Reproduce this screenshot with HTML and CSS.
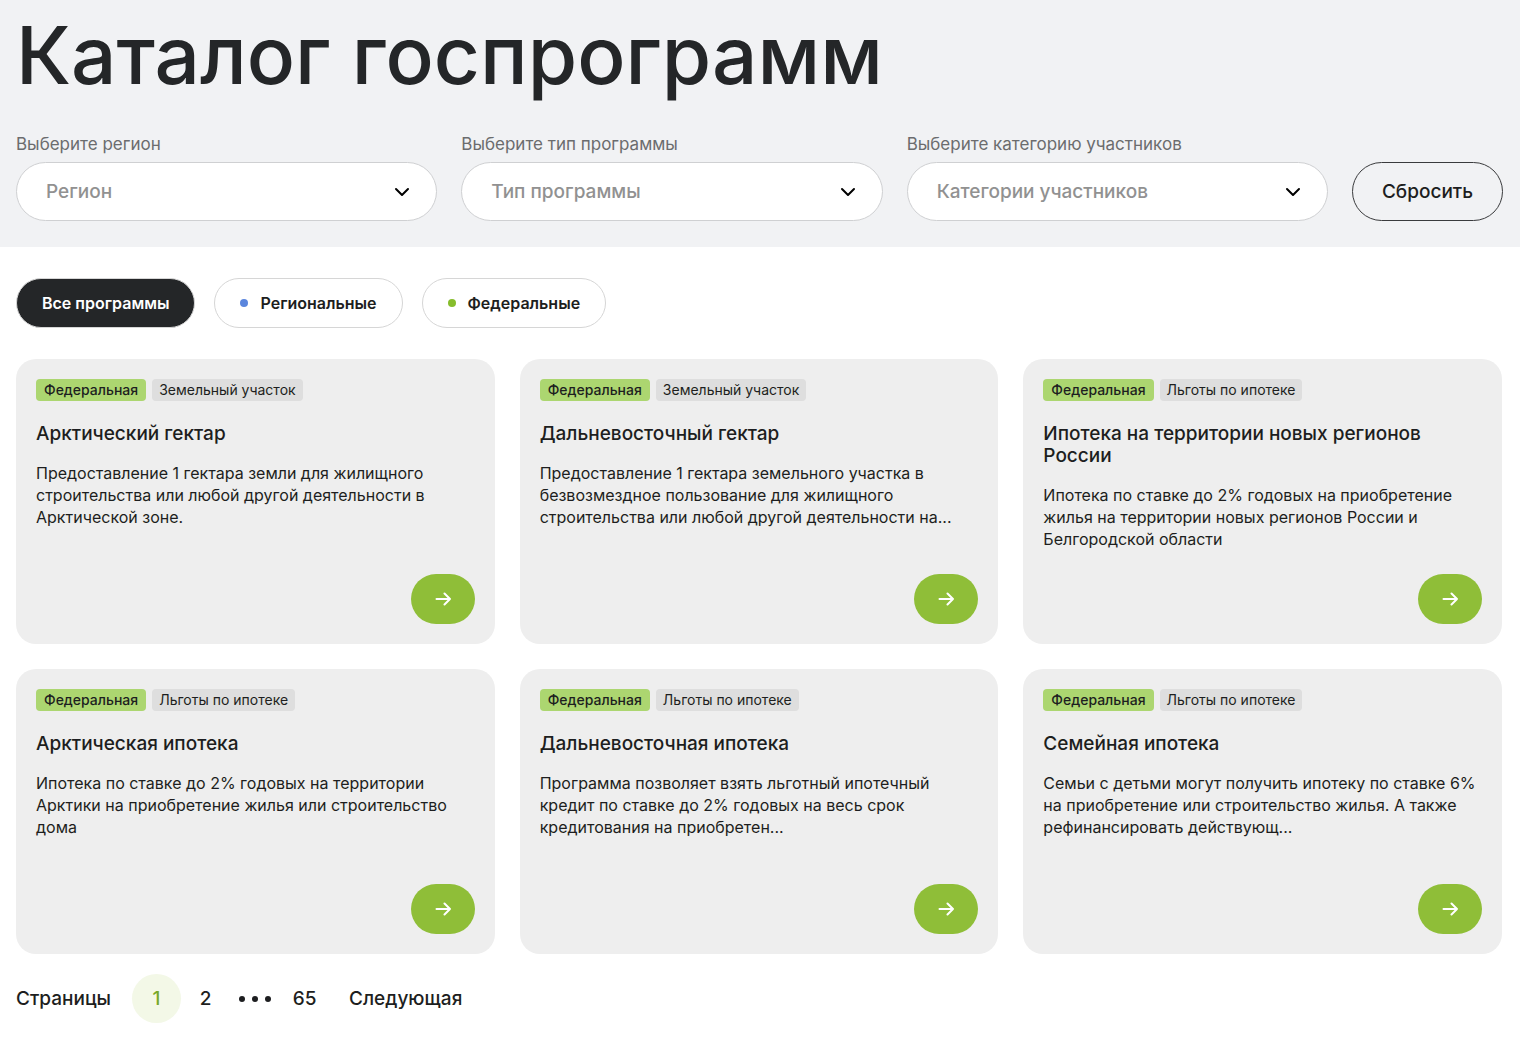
FILE: index.html
```html
<!DOCTYPE html>
<html lang="ru">
<head>
<meta charset="utf-8">
<meta name="viewport" content="width=device-width, initial-scale=1">
<title>Каталог госпрограмм</title>
<link rel="stylesheet" href="styles.css">
</head>
<body>
<svg class="sprite" aria-hidden="true">
  <symbol id="chevron" viewBox="0 0 16 10"><path d="M2 2l6 6 6-6" fill="none" stroke="currentColor" stroke-width="2" stroke-linecap="round" stroke-linejoin="round"/></symbol>
  <symbol id="arrow" viewBox="0 0 16 14"><path d="M1.5 7H15M9.500 1.500L15 7l-5.500 5.500" fill="none" stroke="currentColor" stroke-width="2" stroke-linecap="round" stroke-linejoin="round"/></symbol>
</svg>
<header class="hero">
  <h1 class="hero-title">Каталог госпрограмм</h1>
  <form class="filters">
    <div class="field">
      <label class="field-label" for="region">Выберите регион</label>
      <div class="select-box">
        <select class="select" id="region"><option>Регион</option></select>
        <svg class="chevron"><use href="#chevron"/></svg>
      </div>
    </div>
    <div class="field">
      <label class="field-label" for="type">Выберите тип программы</label>
      <div class="select-box">
        <select class="select" id="type"><option>Тип программы</option></select>
        <svg class="chevron"><use href="#chevron"/></svg>
      </div>
    </div>
    <div class="field">
      <label class="field-label" for="category">Выберите категорию участников</label>
      <div class="select-box">
        <select class="select" id="category"><option>Категории участников</option></select>
        <svg class="chevron"><use href="#chevron"/></svg>
      </div>
    </div>
    <button class="reset" type="reset">Сбросить</button>
  </form>
</header>
<main class="content">
  <div class="tabs">
    <button class="tab tab-active" type="button">Все программы</button>
    <button class="tab" type="button"><span class="dot dot-blue"></span>Региональные</button>
    <button class="tab" type="button"><span class="dot dot-green"></span>Федеральные</button>
  </div>
  <section class="cards">
    <article class="card">
      <div class="tags"><span class="tag tag-green">Федеральная</span><span class="tag">Земельный участок</span></div>
      <h2 class="card-title">Арктический гектар</h2>
      <p class="card-text">Предоставление 1 гектара земли для жилищного<br>строительства или любой другой деятельности в<br>Арктической зоне.</p>
      <a class="card-link" href="#" aria-label="Подробнее"><svg class="arrow"><use href="#arrow"/></svg></a>
    </article>
    <article class="card">
      <div class="tags"><span class="tag tag-green">Федеральная</span><span class="tag">Земельный участок</span></div>
      <h2 class="card-title">Дальневосточный гектар</h2>
      <p class="card-text">Предоставление 1 гектара земельного участка в<br>безвозмездное пользование для жилищного<br>строительства или любой другой деятельности на...</p>
      <a class="card-link" href="#" aria-label="Подробнее"><svg class="arrow"><use href="#arrow"/></svg></a>
    </article>
    <article class="card">
      <div class="tags"><span class="tag tag-green">Федеральная</span><span class="tag">Льготы по ипотеке</span></div>
      <h2 class="card-title">Ипотека на территории новых регионов<br>России</h2>
      <p class="card-text">Ипотека по ставке до 2% годовых на приобретение<br>жилья на территории новых регионов России и<br>Белгородской области</p>
      <a class="card-link" href="#" aria-label="Подробнее"><svg class="arrow"><use href="#arrow"/></svg></a>
    </article>
    <article class="card">
      <div class="tags"><span class="tag tag-green">Федеральная</span><span class="tag">Льготы по ипотеке</span></div>
      <h2 class="card-title">Арктическая ипотека</h2>
      <p class="card-text">Ипотека по ставке до 2% годовых на территории<br>Арктики на приобретение жилья или строительство<br>дома</p>
      <a class="card-link" href="#" aria-label="Подробнее"><svg class="arrow"><use href="#arrow"/></svg></a>
    </article>
    <article class="card">
      <div class="tags"><span class="tag tag-green">Федеральная</span><span class="tag">Льготы по ипотеке</span></div>
      <h2 class="card-title">Дальневосточная ипотека</h2>
      <p class="card-text">Программа позволяет взять льготный ипотечный<br>кредит по ставке до 2% годовых на весь срок<br>кредитования на приобретен...</p>
      <a class="card-link" href="#" aria-label="Подробнее"><svg class="arrow"><use href="#arrow"/></svg></a>
    </article>
    <article class="card">
      <div class="tags"><span class="tag tag-green">Федеральная</span><span class="tag">Льготы по ипотеке</span></div>
      <h2 class="card-title">Семейная ипотека</h2>
      <p class="card-text">Семьи с детьми могут получить ипотеку по ставке 6%<br>на приобретение или строительство жилья. А также<br>рефинансировать действующ...</p>
      <a class="card-link" href="#" aria-label="Подробнее"><svg class="arrow"><use href="#arrow"/></svg></a>
    </article>
  </section>
  <nav class="pages" aria-label="Страницы">
    <span class="pages-label">Страницы</span>
    <a class="page page-current" href="#" aria-current="page">1</a>
    <a class="page" href="#">2</a>
    <span class="page-gap"><i class="page-dot"></i><i class="page-dot"></i><i class="page-dot"></i></span>
    <a class="page" href="#">65</a>
    <a class="page-next" href="#">Следующая</a>
  </nav>
</main>
</body>
</html>
```
FILE: styles.css
```css
*, *::before, *::after { box-sizing: border-box; }

body {
  margin: 0;
  background: #fff;
  color: #1d1e20;
  font-family: Inter, "Open Sans", sans-serif;
  font-size: 16px;
  line-height: 22px;
}

h1, h2, p { margin: 0; }
a { color: inherit; text-decoration: none; }
button, select { font: inherit; color: inherit; margin: 0; cursor: pointer; }
.sprite { display: none; }

.hero { padding: 5px 17px 26px 16px; background: #f1f2f4; }
.hero-title {
  font-size: 80px;
  line-height: 100px;
  font-weight: 500;
  color: #242628;
}
.filters { display: flex; align-items: flex-end; gap: 24px; margin-top: 28px; }
.field { flex: 1 1 0; min-width: 0; }
.field-label { display: block; margin-bottom: 7px; color: #6b6c6e; font-size: 17px; }
.select-box { display: grid; align-items: center; }
.select, .chevron { grid-area: 1 / 1; }
.select {
  appearance: none;
  width: 100%;
  height: 59px;
  padding: 0 60px 0 29px;
  border: 1px solid #cfd0d2;
  border-radius: 30px;
  background: #fff;
  color: #919191;
  font-size: 19px;
  font-weight: 500;
}
.chevron {
  justify-self: end;
  width: 16px;
  height: 10px;
  margin-right: 27px;
  color: #000;
  pointer-events: none;
}
.reset {
  width: 151px;
  height: 59px;
  padding: 0;
  border: 1px solid #3a3b3d;
  border-radius: 30px;
  background: transparent;
  font-size: 19px;
  font-weight: 500;
}

.content { padding: 31px 18px 24px 16px; }
.tabs { display: flex; gap: 19px; }
.tab {
  display: flex;
  align-items: center;
  gap: 12px;
  height: 50px;
  padding: 0 25px;
  border: 1px solid #d6d6d6;
  border-radius: 25px;
  background: #fff;
  font-weight: 600;
}
.tab-active { background: #242628; color: #fff; }
.dot { width: 8px; height: 8px; border-radius: 50%; }
.dot-blue { background: #5b86dd; }
.dot-green { background: #86bd2c; }

.cards {
  display: grid;
  grid-template-columns: repeat(3, minmax(0, 1fr));
  gap: 25px;
  margin-top: 31px;
}
.card {
  display: flex;
  flex-direction: column;
  min-height: 285px;
  padding: 20px;
  border-radius: 20px;
  background: #eee;
}
.tags { display: flex; gap: 6px; }
.tag {
  padding: 0 7px;
  border-radius: 4px;
  background: #dedede;
  font-size: 14px;
}
.tag-green { padding: 0 8px; background: #acd670; font-weight: 500; }
.card-title { margin-top: 22px; font-size: 19px; line-height: 22px; font-weight: 500; }
.card-text { margin-top: 17px; white-space: nowrap; }
.card-link {
  display: grid;
  place-items: center;
  align-self: flex-end;
  width: 64px;
  height: 50px;
  margin-top: auto;
  border-radius: 25px;
  background: #8fbe38;
  color: #fff;
}
.arrow { width: 16px; height: 14px; }

.pages {
  display: flex;
  align-items: center;
  margin-top: 20px;
  font-size: 19px;
  font-weight: 500;
}
.pages-label { margin-right: 21px; }
.page {
  display: grid;
  place-items: center;
  width: 49px;
  height: 49px;
  border-radius: 50%;
}
.page-current { background: #f3f8e7; color: #77a82a; }
.page-gap { display: flex; gap: 7px; padding: 0 9px; }
.page-dot { width: 6px; height: 6px; border-radius: 50%; background: #1d1e20; }
.page-next { margin-left: 20px; }
```
